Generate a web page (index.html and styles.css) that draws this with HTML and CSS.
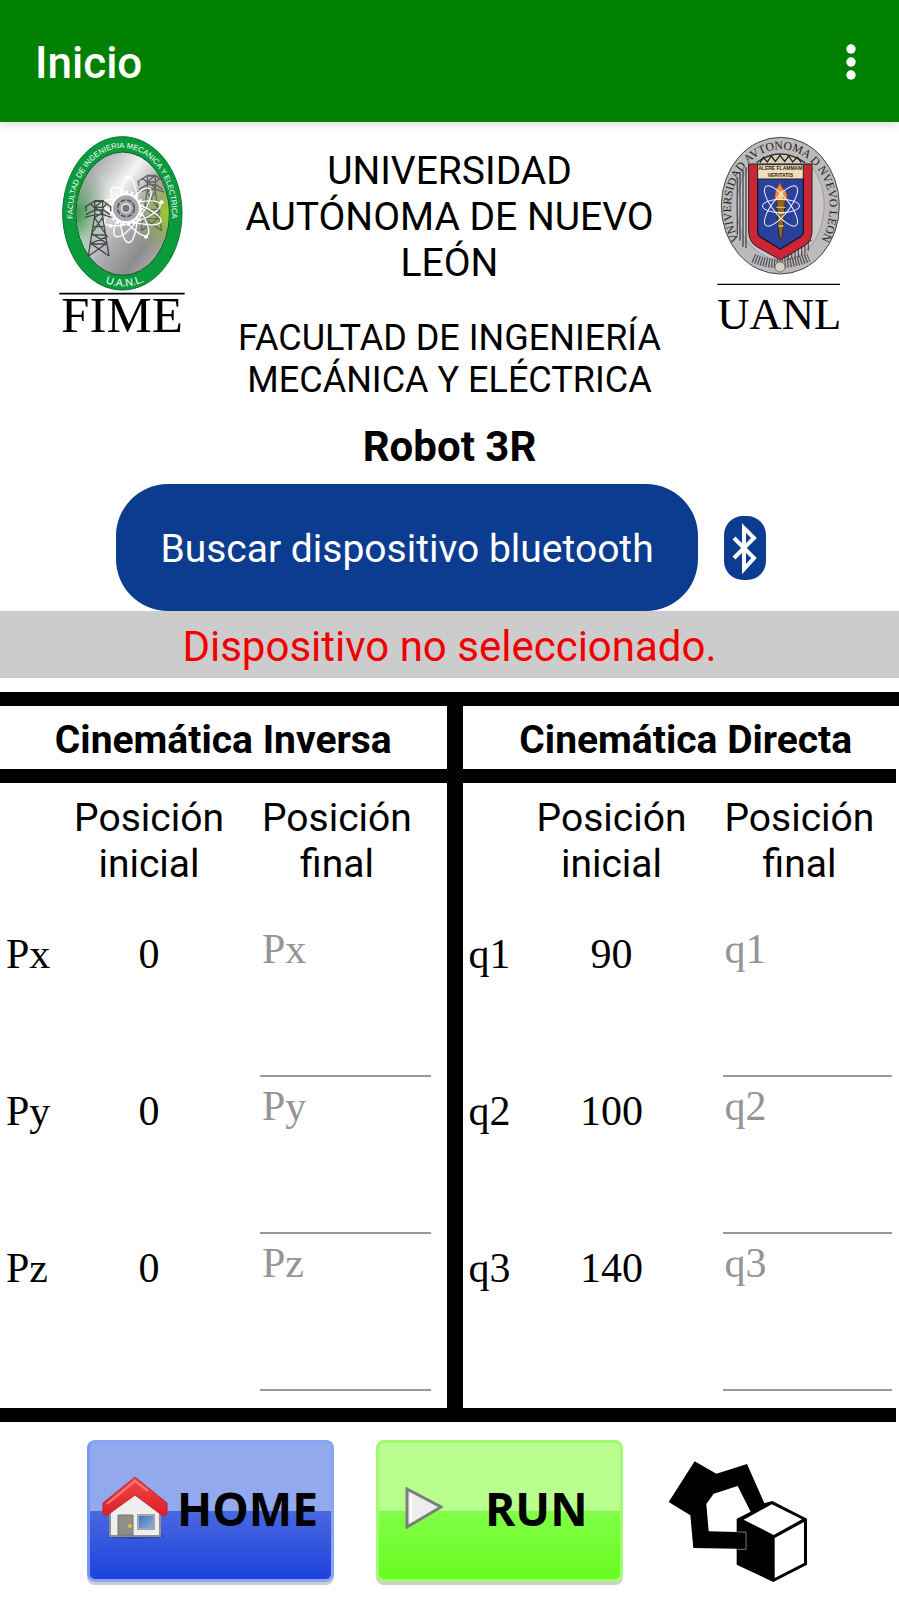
FILE: index.html
```html
<!DOCTYPE html>
<html lang="es">
<head>
<meta charset="utf-8">
<meta name="viewport" content="width=device-width, initial-scale=1">
<title>Inicio</title>
<link rel="stylesheet" href="styles.css">
</head>
<body>
<header class="app-bar">
  <span class="app-title">Inicio</span>
  <button class="menu-button" type="button" aria-label="Más opciones">
    <svg width="12" height="40" viewBox="0 0 12 40" fill="#fff"><circle cx="6" cy="6" r="4.7"/><circle cx="6" cy="19" r="4.7"/><circle cx="6" cy="32" r="4.7"/></svg>
  </button>
</header>

<main>
  <section class="hero">
    <svg class="logo-fime" viewBox="0 6 480 690" role="img" aria-label="FIME">
      <defs>
        <linearGradient id="metal" x1="0" y1="0" x2="1" y2="1">
          <stop offset="0" stop-color="#8c8a8d"/><stop offset=".2" stop-color="#b9b8ba"/><stop offset=".38" stop-color="#f4f4f4"/><stop offset=".55" stop-color="#b3b1b4"/><stop offset=".75" stop-color="#8d8b8e"/><stop offset="1" stop-color="#cfced0"/>
        </linearGradient>
        <radialGradient id="lime" cx="1" cy=".5" r=".4"><stop offset="0" stop-color="#9fd021"/><stop offset="1" stop-color="#8a9a60" stop-opacity="0"/></radialGradient>
        <radialGradient id="moss" cx="0" cy=".5" r=".4"><stop offset="0" stop-color="#3f9a50"/><stop offset="1" stop-color="#6a9a70" stop-opacity="0"/></radialGradient>
        <path id="ringTop" d="M101 320A149 197 0 1 1 393 320"/>
        <path id="ringLow" d="M185 484Q250 516 325 480"/>
        <g id="tower" fill="none" stroke-width="4">
          <path d="M163 292L145 408M188 292L207 408M163 292L202 350L152 370L207 408M188 292L155 340L200 370L146 408M158 320H194M154 345H198M150 372H202M164 240V292M188 240V292M164 242H188L164 262L188 278L164 292M164 262H188M134 262L162 244H190L214 262M138 262V274M212 262V274M138 284L164 270H190L210 284M134 292L166 284H190L214 292M150 250L164 264M202 250L188 264"/>
        </g>
      </defs>
      <ellipse cx="247" cy="280" rx="179" ry="230" fill="#0a9b3d" stroke="#087431" stroke-width="3"/>
      <ellipse cx="248" cy="281" rx="140" ry="185" fill="url(#metal)" stroke="#075d28" stroke-width="3"/>
      <ellipse cx="248" cy="281" rx="138" ry="183" fill="url(#lime)"/>
      <ellipse cx="248" cy="281" rx="138" ry="183" fill="url(#moss)"/>
      <use href="#tower" stroke="#66656a" transform="translate(158 -76)"/>
      <g fill="none" stroke="#fff" stroke-width="4">
        <ellipse cx="266" cy="269" rx="27" ry="99"/>
        <ellipse cx="280" cy="269" rx="27" ry="88" transform="rotate(36 266 269)"/>
        <ellipse cx="280" cy="262" rx="27" ry="88" transform="rotate(72 266 269)"/>
        <ellipse cx="270" cy="258" rx="27" ry="92" transform="rotate(108 266 269)"/>
        <ellipse cx="266" cy="262" rx="27" ry="88" transform="rotate(144 266 269)"/>
      </g>
      <circle cx="258" cy="265" r="42" fill="#aaa8ac" stroke="#fff" stroke-width="6"/>
      <circle cx="258" cy="265" r="48" fill="none" stroke="#fff" stroke-width="10" stroke-dasharray="7 9"/>
      <circle cx="258" cy="265" r="25" fill="none" stroke="#57565b" stroke-width="5" stroke-dasharray="15 5"/>
      <circle cx="258" cy="265" r="13" fill="#77757b" stroke="#eee" stroke-width="4"/>
      <g fill="#fff"><circle cx="266" cy="174" r="6"/><circle cx="365" cy="247" r="6"/><circle cx="318" cy="350" r="6"/><circle cx="212" cy="318" r="6"/></g>
      <use href="#tower" stroke="#48474c"/>
      <text class="ring-sans" font-size="23"><textPath href="#ringTop" startOffset="50%" text-anchor="middle">FACULTAD DE INGENIERIA MECANICA Y ELECTRICA</textPath></text>
      <text class="ring-sans" font-size="32"><textPath href="#ringLow" startOffset="50%" text-anchor="middle">U.A.N.L.</textPath></text>
      <path d="M58 521H434" stroke="#000" stroke-width="5"/>
      <text class="logo-word" x="246" y="636" font-size="153" text-anchor="middle">FIME</text>
    </svg>

    <div class="headings">
      <h1>UNIVERSIDAD AUTÓNOMA DE NUEVO LEÓN</h1>
      <h2>FACULTAD DE INGENIERÍA MECÁNICA Y ELÉCTRICA</h2>
      <p class="project">Robot 3R</p>
    </div>

    <svg class="logo-uanl" viewBox="-3 6 510 690" role="img" aria-label="UANL">
      <defs><path id="ringSeal" d="M121 364A148 174 0 1 1 361 364"/></defs>
      <ellipse cx="241" cy="257" rx="177" ry="205" fill="#bcbabd" stroke="#444" stroke-width="3"/>
      <path d="M132 350C95 285 108 170 160 130Q240 85 322 130C378 175 390 280 345 360Q310 415 241 424Q170 410 132 350Z" fill="#c9c7ca" stroke="#88868a" stroke-width="2"/>
      <path d="M112 175V345M120 162V362M129 150V380M138 142V385" stroke="#49484c" stroke-width="4"/>
      <path d="M170 128Q240 76 315 128" fill="#d9cfb9" stroke="#333" stroke-width="4"/>
      <path d="M180 128L190 112L202 126L214 108L226 124L240 106L254 124L266 108L278 126L292 112L304 128" fill="none" stroke="#222" stroke-width="4"/>
      <path d="M252 415L335 360M265 420V375M275 418V368M285 416V362M295 412V356M305 408V350M315 400V344M325 392V338" stroke="#555358" stroke-width="4"/>
      <path d="M146 132H336V338Q334 364 312 378L241 420L170 380Q148 366 146 338Z" fill="#cc2634" stroke="#222" stroke-width="3"/>
      <path d="M173 175H310V338Q309 346 302 350L241 387L180 350Q174 346 173 338Z" fill="#29419a" stroke="#14142a" stroke-width="4"/>
      <path d="M173 134H310V177H173Z" fill="#f2ddb9" stroke="#222" stroke-width="3"/>
      <text class="motto" font-size="15" x="241" y="151" text-anchor="middle">ALERE FLAMMAM</text>
      <text class="motto" font-size="15" x="241" y="171" text-anchor="middle">VERITATIS</text>
      <path d="M230 240H256L250 318L246 357H239L234 318Z" fill="#8a672c" stroke="#322818" stroke-width="3"/>
      <path d="M229 262H256M234 280H252M235 318H251" stroke="#eabb5c" stroke-width="4"/>
      <path d="M226 240Q221 213 241 190Q243 204 252 209Q267 224 257 242Z" fill="#f18b35" stroke="#b44c22" stroke-width="2"/>
      <path d="M234 236Q235 218 244 211Q253 225 247 238Z" fill="#ffd16b"/>
      <g fill="none" stroke="#edf0ff" stroke-width="3">
        <ellipse cx="243" cy="258" rx="56" ry="20"/>
        <ellipse cx="243" cy="258" rx="74" ry="25" transform="rotate(52 243 258)"/>
        <ellipse cx="243" cy="258" rx="74" ry="25" transform="rotate(-52 243 258)"/>
      </g>
      <path d="M160 414Q235 448 326 412" fill="none" stroke="#55545a" stroke-width="28" stroke-dasharray="4 4"/>
      <circle cx="240" cy="441" r="15" fill="#d8d2c4" stroke="#777" stroke-width="3"/>
      <text class="ring-serif" font-size="35"><textPath href="#ringSeal" startOffset="50%" text-anchor="middle">VNIVERSIDAD AVTONOMA D NVEVO LEON</textPath></text>
      <path d="M52 493H420" stroke="#000" stroke-width="4"/>
      <text class="logo-word" x="238" y="627" font-size="134" text-anchor="middle">UANL</text>
    </svg>
  </section>

  <div class="connect">
    <button class="search-button" type="button">Buscar dispositivo bluetooth</button>
    <svg class="bluetooth" viewBox="0 0 42 64" role="img" aria-label="Bluetooth">
      <rect width="42" height="64" rx="19" fill="#0c3c90"/>
      <path d="M10 22L30 42L20 53V12L30 22L10 42" fill="none" stroke="#fff" stroke-width="4"/>
    </svg>
  </div>
  <p class="status" role="status">Dispositivo no seleccionado.</p>

  <div class="panels">
    <section class="panel">
      <h3>Cinemática Inversa</h3>
      <table>
        <colgroup><col class="col-name"><col class="col-start"><col></colgroup>
        <thead><tr><td></td><th scope="col">Posición inicial</th><th scope="col" class="final"><span>Posición<br>final</span></th></tr></thead>
        <tbody>
          <tr><th scope="row"><label for="px">Px</label></th><td>0</td><td class="entry"><input id="px" type="text" placeholder="Px"></td></tr>
          <tr><th scope="row"><label for="py">Py</label></th><td>0</td><td class="entry"><input id="py" type="text" placeholder="Py"></td></tr>
          <tr><th scope="row"><label for="pz">Pz</label></th><td>0</td><td class="entry"><input id="pz" type="text" placeholder="Pz"></td></tr>
        </tbody>
      </table>
    </section>
    <section class="panel panel-direct">
      <h3>Cinemática Directa</h3>
      <table>
        <colgroup><col class="col-name"><col class="col-start"><col></colgroup>
        <thead><tr><td></td><th scope="col">Posición inicial</th><th scope="col" class="final"><span>Posición<br>final</span></th></tr></thead>
        <tbody>
          <tr><th scope="row"><label for="q1">q1</label></th><td>90</td><td class="entry"><input id="q1" type="text" placeholder="q1"></td></tr>
          <tr><th scope="row"><label for="q2">q2</label></th><td>100</td><td class="entry"><input id="q2" type="text" placeholder="q2"></td></tr>
          <tr><th scope="row"><label for="q3">q3</label></th><td>140</td><td class="entry"><input id="q3" type="text" placeholder="q3"></td></tr>
        </tbody>
      </table>
    </section>
  </div>
</main>

<footer class="actions">
  <button class="action home" type="button">
    <svg width="66" height="64" viewBox="0 0 66 64" aria-hidden="true">
      <defs>
        <linearGradient id="roof" x1="0" y1="0" x2="0" y2="1"><stop offset="0" stop-color="#f04a4a"/><stop offset="1" stop-color="#dc1d26"/></linearGradient>
        <linearGradient id="pane" x1="0" y1="0" x2="1" y2="1"><stop offset="0" stop-color="#3f6fb5"/><stop offset="1" stop-color="#86b4e6"/></linearGradient>
      </defs>
      <ellipse cx="34" cy="60" rx="28" ry="3" fill="#1c2f80" opacity=".45"/>
      <path d="M8 32L33 12L58 32V60H8Z" fill="#eeeeec" stroke="#8d8f93" stroke-width="2"/>
      <path d="M16 39H31V59H16Z" fill="#8e9088" stroke="#73756f" stroke-width="1"/>
      <circle cx="28" cy="50" r="2" fill="#d7c340"/>
      <path d="M36 39H52V53H36Z" fill="url(#pane)" stroke="#a4a7aa" stroke-width="2"/>
      <path d="M33 1L1 27V38L4 40L33 19L61 40L65 38V27Z" fill="url(#roof)" stroke="#c8202b" stroke-width="1"/>
      <path d="M5 28L33 5L46 15" fill="none" stroke="#f67c7c" stroke-width="2"/>
    </svg>
    <span>HOME</span>
  </button>
  <button class="action run" type="button">
    <svg width="38" height="42" viewBox="0 0 38 42" aria-hidden="true">
      <path d="M2 2L36 20L2 40Z" fill="#ededed" stroke="#78807a" stroke-width="3"/>
      <path d="M6 8V34" stroke="#fff" stroke-width="2"/>
    </svg>
    <span>RUN</span>
  </button>
  <svg class="robot" viewBox="45 0 441 435" role="img" aria-label="Robot">
    <path fill-rule="evenodd" d="M134 64L199 101L291 72L343 190L367 183L471 236V374L370 426L260 374V326L130 324L121 226L56 186ZM263 138L191 161L169 192L176 274L260 276V236L302 215Z"/>
    <path d="M281 239L365 193L456 238L371 285Z" fill="#fff"/>
    <path d="M374 294L462 246V369L374 414Z" fill="#fff"/>
    <path d="M262 276H288V328H262" fill="none" stroke="#777" stroke-width="3"/>
  </svg>
</footer>
</body>
</html>
```

FILE: styles.css
```css
* { box-sizing: border-box; }

body {
  margin: 0;
  background: #fff;
  color: #000;
  font-family: Roboto, "Liberation Sans", sans-serif;
}

h1, h2, h3, p { margin: 0; font-weight: 400; }
button { border: 0; cursor: pointer; }

.app-bar {
  display: flex;
  align-items: center;
  justify-content: space-between;
  height: 122px;
  padding: 4px 30px 0 35px;
  background: #008000;
  color: #fff;
  box-shadow: 0 2px 10px rgba(0, 0, 0, .16);
}
.app-title { font-size: 44px; line-height: 48px; font-weight: 500; }
.menu-button { padding: 0 12px; background: none; }
.menu-button svg { display: block; }

.hero { display: grid; grid-template-columns: 200px 1fr 200px; }
.logo-fime { width: 160px; height: 230px; margin-left: 40px; }
.logo-uanl { width: 170px; height: 230px; }
.logo-word { font-family: "Liberation Serif", serif; }
.ring-sans { font-family: "Liberation Sans", sans-serif; fill: #fff; }
.ring-serif { font-family: "Liberation Serif", serif; fill: #222; }
.motto { font-family: "Liberation Sans", sans-serif; font-weight: 700; fill: #2b2115; }

.headings {
  display: flex;
  flex-direction: column;
  align-items: center;
  padding-top: 26px;
  text-align: center;
}
.headings h1 { max-width: 430px; font-size: 39px; line-height: 46px; }
.headings h2 { max-width: 460px; margin-top: 31px; font-size: 36px; line-height: 42px; }
.project { margin-top: 22px; font-size: 42px; line-height: 48px; font-weight: 700; }

.connect {
  display: flex;
  align-items: center;
  gap: 26px;
  margin-top: 13px;
  padding: 0 133px 0 116px;
}
.search-button {
  flex: 1;
  height: 127px;
  padding: 2px 0 0;
  border-radius: 52px;
  background: #0c3c90;
  color: #fff;
  font: 400 39px/46px Roboto, sans-serif;
}
.bluetooth { width: 42px; height: 64px; }
.status {
  padding: 12px 0 7px;
  background: #ccc;
  color: #f00000;
  font-size: 42px;
  line-height: 48px;
  text-align: center;
}

.panels {
  display: grid;
  grid-template-columns: 1fr 1fr;
  margin-top: 14px;
  border-top: 14px solid #000;
}
.panel { border-right: 3px solid #000; }
.panel-direct { padding-right: 3px; border-right: 0; border-left: 13px solid #000; }
.panel h3 {
  padding: 11px 0 6px;
  border-bottom: 14px solid #000;
  font-size: 39px;
  line-height: 46px;
  font-weight: 700;
  text-align: center;
}
.panel-direct h3 { padding-left: 13px; }
.panel table {
  width: 100%;
  border-bottom: 14px solid #000;
  border-collapse: separate;
  border-spacing: 0;
  table-layout: fixed;
}
.col-name { width: 70px; }
.col-start { width: 158px; }
.panel th, .panel td { padding: 0; font-weight: 400; vertical-align: top; }
.panel thead th {
  height: 139px;
  padding-top: 12px;
  font-size: 39px;
  line-height: 46px;
}
.panel thead .final { padding-left: 34px; text-align: left; }
.final span { display: inline-block; text-align: center; }
.panel tbody { font-family: "Liberation Serif", serif; font-size: 42px; line-height: 48px; }
.panel tbody th { padding: 8px 0 0 6px; text-align: left; }
.panel tbody td { height: 157px; padding-top: 8px; text-align: center; }
.panel tbody .entry { padding: 3px 16px 0 32px; }
.panel-direct tbody .entry { padding-right: 4px; }
.panel tbody tr:last-child td { height: 172px; }
.entry input {
  display: block;
  width: 100%;
  height: 152px;
  padding: 0 0 102px 2px;
  border: 0;
  border-bottom: 2px solid #999;
  border-radius: 0;
  background: none;
  color: #000;
  font: inherit;
}
.entry input::placeholder { color: #959595; opacity: 1; }

.actions { display: flex; gap: 42px; padding: 18px 20px 14px 87px; }
.action {
  display: flex;
  align-items: center;
  width: 247px;
  height: 142px;
  border-radius: 8px;
  font: 700 46px/60px "Open Sans", "Noto Sans", sans-serif;
}
.home {
  gap: 9px;
  padding: 0 0 7px 12px;
  border: 3px solid #88a5f4;
  border-left-color: #7898ee;
  background: linear-gradient(#93a9ee 0 50%, #4968e0 50%, #1d43dc 100%);
  box-shadow: 0 3px #ccc;
}
.run {
  gap: 42px;
  padding: 0 0 7px 26px;
  border: 3px solid #a0fb72;
  background: linear-gradient(#b8ff90 0 50%, #82fe48 50%, #68fc20 100%);
  box-shadow: 0 3px #ccc;
}
.robot { width: 147px; height: 145px; }
```
